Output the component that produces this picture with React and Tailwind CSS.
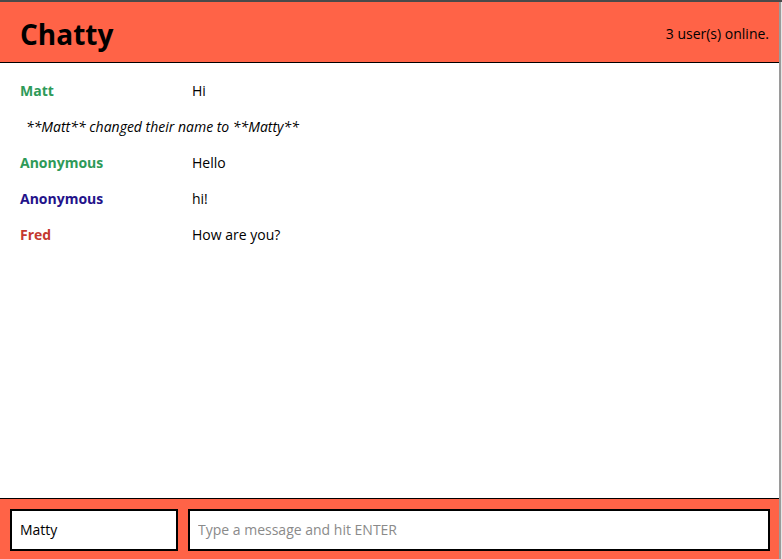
export default function App() {
  const rows = [
    { type: "msg", name: "Matt", color: "text-[#2e9a58]", text: "Hi" },
    { type: "note", text: "**Matt** changed their name to **Matty**" },
    { type: "msg", name: "Anonymous", color: "text-[#2e9a58]", text: "Hello" },
    { type: "msg", name: "Anonymous", color: "text-[#23128a]", text: "hi!" },
    { type: "msg", name: "Fred", color: "text-[#c4392f]", text: "How are you?" },
  ];
  return (
    <div className="flex flex-col h-[559px] w-[782px] overflow-hidden bg-white" style={{ fontFamily: '"Open Sans", sans-serif' }}>
      <div className="h-[2px] bg-[#4a4a4a] shrink-0" />
      <div className="flex flex-1 min-h-0">
        <div className="flex flex-col w-[779px]">
          <header className="h-[61px] shrink-0 bg-[#ff6347] border-b border-black flex items-center justify-between pl-5 pr-[10px]">
            <h1 className="text-[28px] font-bold text-black leading-none mt-[4px]">Chatty</h1>
            <span className="text-[14px] text-black mt-[2px]">3 user(s) online.</span>
          </header>
          <main className="flex-1 min-h-0 pt-[9px] text-[14px] text-black">
            {rows.map((r, i) =>
              r.type === "msg" ? (
                <div key={i} className="flex items-center h-[36px] pl-5">
                  <span className={`w-[172px] font-bold ${r.color}`}>{r.name}</span>
                  <span>{r.text}</span>
                </div>
              ) : (
                <div key={i} className="flex items-center h-[36px] pl-[26px] italic">
                  {r.text}
                </div>
              )
            )}
          </main>
          <footer className="h-[61px] shrink-0 bg-[#ff6347] border-t border-black flex gap-[10px] pl-[10px] pr-[9px] pt-[10px] pb-[8px]">
            <input
              defaultValue="Matty"
              className="w-[168px] h-[42px] border-2 border-black bg-white px-[8px] pb-[1px] text-[14px] text-black outline-none"
              style={{ fontFamily: '"Open Sans", sans-serif' }}
            />
            <input
              placeholder="Type a message and hit ENTER"
              className="flex-1 h-[42px] border-2 border-black bg-white px-[8px] pb-[1px] text-[14px] text-black placeholder:text-[#8a8a8a] outline-none"
              style={{ fontFamily: '"Open Sans", sans-serif' }}
            />
          </footer>
        </div>
        <div className="w-[2px] bg-[#9a9a9a]" />
        <div className="w-[1px] bg-[#e6e6e6]" />
      </div>
    </div>
  );
}
